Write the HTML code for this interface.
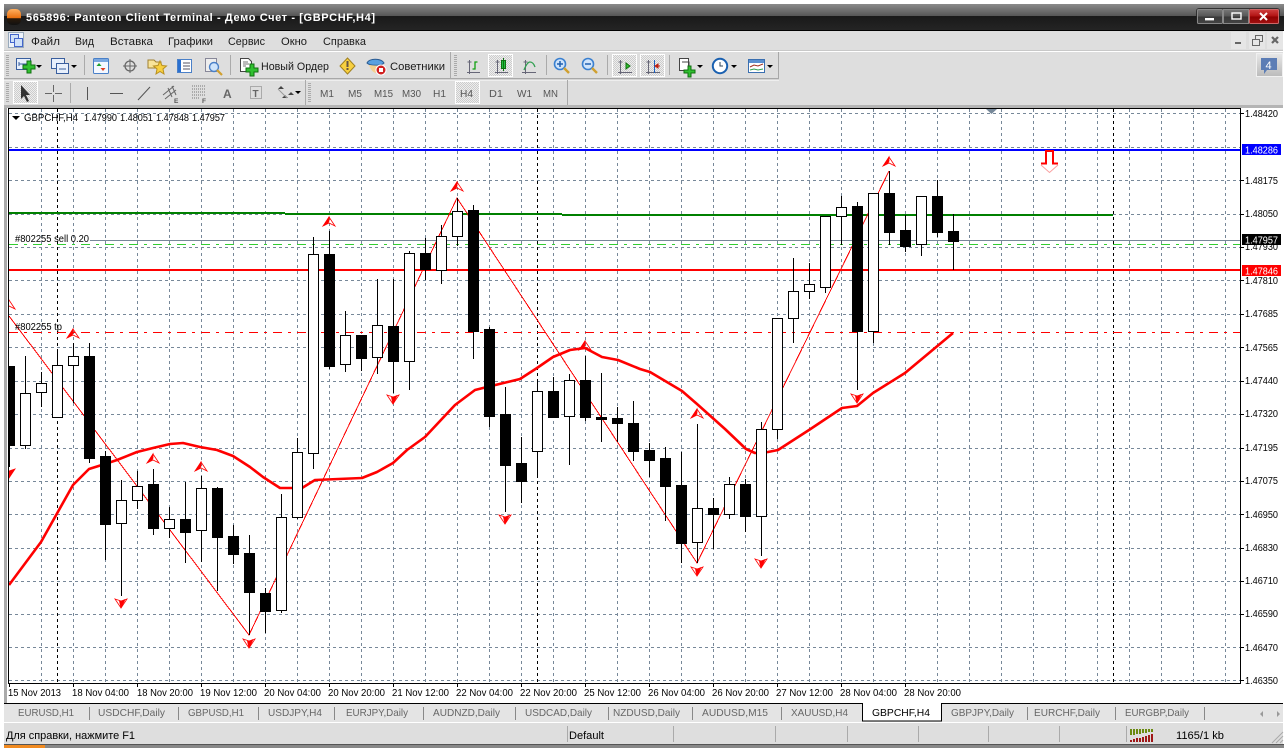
<!DOCTYPE html>
<html><head><meta charset="utf-8"><title>Panteon Client Terminal</title>
<style>
html,body{margin:0;padding:0;background:#fff;width:1288px;height:748px;overflow:hidden}
svg{display:block}
text{font-family:"Liberation Sans","Noto Sans CJK JP",sans-serif;font-size:10px;fill:#000}
.m{font-size:11px;fill:#1a1a1a}
.tf{fill:#555}
.tab{fill:#666;font-size:10.5px}
</style></head><body>
<svg width="1288" height="748" viewBox="0 0 1288 748" xmlns="http://www.w3.org/2000/svg">
<defs>
<linearGradient id="t1" x1="0" y1="0" x2="0" y2="1"><stop offset="0" stop-color="#8a8a8a"/><stop offset="1" stop-color="#565656"/></linearGradient>
<linearGradient id="t2" x1="0" y1="0" x2="0" y2="1"><stop offset="0" stop-color="#191919"/><stop offset="1" stop-color="#242424"/></linearGradient>
<linearGradient id="orb" x1="0" y1="0" x2="0" y2="1"><stop offset="0" stop-color="#ffb060"/><stop offset=".55" stop-color="#e87010"/><stop offset=".6" stop-color="#2a1a0a"/><stop offset="1" stop-color="#111"/></linearGradient>
<linearGradient id="bg" x1="0" y1="0" x2="0" y2="1"><stop offset="0" stop-color="#777"/><stop offset=".5" stop-color="#555"/><stop offset=".5" stop-color="#383838"/><stop offset="1" stop-color="#444"/></linearGradient>
<linearGradient id="br" x1="0" y1="0" x2="0" y2="1"><stop offset="0" stop-color="#d04040"/><stop offset=".5" stop-color="#b01010"/><stop offset=".5" stop-color="#900000"/><stop offset="1" stop-color="#a01010"/></linearGradient>
<linearGradient id="bub" x1="0" y1="0" x2="0" y2="1"><stop offset="0" stop-color="#e8e8e8"/><stop offset="1" stop-color="#bbb"/></linearGradient>
<pattern id="dith" width="2" height="2" patternUnits="userSpaceOnUse"><rect width="2" height="2" fill="#eee"/><rect width="1" height="1" fill="#ccc"/><rect x="1" y="1" width="1" height="1" fill="#ccc"/></pattern>
<clipPath id="cc"><rect x="9" y="109" width="1231" height="574"/></clipPath>
</defs>

<!-- window chrome -->
<rect x="4" y="4" width="1280" height="12" fill="url(#t1)"/>
<rect x="4" y="16" width="1280" height="14" fill="url(#t2)"/>
<rect x="4" y="30" width="1280" height="1" fill="#000"/>
<rect x="7" y="9" width="14" height="16" rx="5" fill="url(#orb)"/>
<text x="26" y="21" textLength="349" lengthAdjust="spacing" style="font-size:11px;font-weight:bold;fill:#fff">565896: Panteon Client Terminal - Демо Счет - [GBPCHF,H4]</text>
<rect x="1196" y="8" width="84" height="17" rx="3" fill="#222" opacity=".8"/>
<rect x="1197.5" y="9.5" width="25" height="14" rx="1" fill="url(#bg)" stroke="#888"/>
<rect x="1223.5" y="9.5" width="25" height="14" fill="url(#bg)" stroke="#888"/>
<rect x="1249.5" y="9.5" width="29" height="14" rx="1" fill="url(#br)" stroke="#c66"/>
<rect x="1205" y="18" width="9" height="2.4" fill="#fff"/>
<rect x="1232" y="13" width="9" height="6" fill="none" stroke="#fff" stroke-width="1.4"/>
<path d="M1260 13l7 7M1267 13l-7 7" stroke="#fff" stroke-width="2"/>

<rect x="4" y="31" width="1279" height="75" fill="#dedede"/>
<rect x="4" y="51" width="1279" height="1" fill="#fff"/>
<rect x="4" y="50" width="1279" height="1" fill="#c8c8c8"/>
<rect x="4" y="105" width="1279" height="3" fill="#b4b4b4"/>
<rect x="4" y="78" width="775" height="1.5" fill="#a8a8a8"/>
<rect x="4" y="79.5" width="775" height="1" fill="#fff"/>
<rect x="778" y="52" width="1" height="27" fill="#a8a8a8"/>
<rect x="567" y="80" width="1" height="25" fill="#a8a8a8"/>
<rect x="450" y="52" width="1" height="26" fill="#aaa"/>
<rect x="305" y="80" width="1" height="25" fill="#aaa"/>

<!-- menu -->
<g fill="none">
<rect x="8.5" y="32.5" width="15" height="15" fill="#eef3fb" stroke="#9ab"/>
<rect x="10.5" y="34.5" width="8" height="8" fill="#cfe0f8" stroke="#46c"/>
<rect x="14.5" y="38.5" width="8" height="8" fill="#cfe0f8" stroke="#46c"/>
</g>
<text class="m" x="31" y="45" textLength="29" lengthAdjust="spacingAndGlyphs">Файл</text>
<text class="m" x="75" y="45" textLength="19" lengthAdjust="spacingAndGlyphs">Вид</text>
<text class="m" x="110" y="45" textLength="43" lengthAdjust="spacingAndGlyphs">Вставка</text>
<text class="m" x="168" y="45" textLength="45" lengthAdjust="spacingAndGlyphs">Графики</text>
<text class="m" x="228" y="45" textLength="37" lengthAdjust="spacingAndGlyphs">Сервис</text>
<text class="m" x="281" y="45" textLength="26" lengthAdjust="spacingAndGlyphs">Окно</text>
<text class="m" x="323" y="45" textLength="43" lengthAdjust="spacingAndGlyphs">Справка</text>
<rect x="1231" y="32" width="15" height="17" fill="#e6e6e6"/><rect x="1249" y="32" width="16" height="17" fill="#e6e6e6"/><rect x="1267" y="32" width="16" height="17" fill="#e6e6e6"/>
<rect x="1235" y="42" width="6" height="2" fill="#666"/>
<path d="M1252.5 39.5h7v6h-7zM1255.5 39v-3.500h7v6h-3" fill="none" stroke="#666"/>
<path d="M1272 37l6 6M1278 37l-6 6" stroke="#666" stroke-width="2.200"/>

<!-- toolbar 1 -->
<path d="M7.500 55v21" stroke="#aaa" stroke-width="3" stroke-dasharray="1 1"/>
<rect x="84" y="55" width="1" height="20" fill="#aaa"/><rect x="230" y="55" width="1" height="20" fill="#aaa"/>
<rect x="546" y="55" width="1" height="20" fill="#aaa"/><rect x="607" y="55" width="1" height="20" fill="#aaa"/><rect x="669" y="55" width="1" height="20" fill="#aaa"/>
<path d="M455.500 55v21" stroke="#aaa" stroke-width="3" stroke-dasharray="1 1"/>
<!-- new chart -->
<rect x="16.500" y="58.500" width="14" height="11" fill="#e8f0fc" stroke="#3a5f9e"/><path d="M19 64h8M19 62v4M27 62v4" stroke="#3a5f9e" fill="none"/>
<path d="M27 61h4v4h4v4h-4v4h-4v-4h-4v-4h4z" fill="#30c030" stroke="#107010"/>
<path d="M36 65h6l-3 3z" fill="#000"/>
<!-- profiles -->
<rect x="51.500" y="58.500" width="13" height="10" fill="#e8f0fc" stroke="#3a5f9e"/><rect x="56.500" y="63.500" width="12" height="10" fill="#e8f0fc" stroke="#3a5f9e"/><path d="M59 69h7" stroke="#3a5f9e"/>
<path d="M71 65h6l-3 3z" fill="#000"/>
<!-- market watch -->
<rect x="93.500" y="58.500" width="15" height="15" rx="1" fill="#f4f8ff" stroke="#4a80c8"/><rect x="94" y="59" width="14" height="3" fill="#7aa8e0"/><path d="M99 63l2.500 3h-5z" fill="#20a030"/><path d="M103 71l2.500-3h-5z" fill="#e04020"/>
<!-- crosshair -->
<circle cx="130" cy="66" r="5" fill="none" stroke="#666" stroke-width="1.300"/><path d="M130 59v14M123 66h14" stroke="#666"/>
<!-- favorites -->
<path d="M148 60h6l2 2h5v6h-13z" fill="#f8e49a" stroke="#a08030"/><path d="M160 61l2 4.500 4.500.5-3.500 3 1 5-4-2.500-4 2.500 1-5-3.500-3 4.500-.5z" fill="#f8d040" stroke="#b89020"/>
<!-- terminal -->
<rect x="177.500" y="59.500" width="14" height="13" fill="#fff" stroke="#4a80c8"/><rect x="178" y="60" width="3" height="12" fill="#2a70d0"/><path d="M183 63h7M183 66h7M183 69h7" stroke="#556"/>
<!-- tester -->
<rect x="205.500" y="58.500" width="11" height="13" fill="#eee" stroke="#889"/><circle cx="214" cy="67" r="4.500" fill="#cfe4fb" stroke="#4a80c8" stroke-width="1.400"/><path d="M217 70l5 5" stroke="#d0a030" stroke-width="2.200"/>
<!-- new order -->
<path d="M240.500 58.500h8l3 3v10h-11z" fill="#fff" stroke="#444"/><path d="M243 62h5M243 64h6M243 66h3" stroke="#777"/>
<path d="M250 64h4v4h4v4h-4v4h-4v-4h-4v-4h4z" fill="#30c030" stroke="#107010"/>
<text class="m" x="261" y="70" textLength="68" lengthAdjust="spacingAndGlyphs">Новый Ордер</text>
<!-- alert -->
<path d="M347.500 58l7.500 8-7.500 8-7.500-8z" fill="#f8d040" stroke="#a08020"/><rect x="346.500" y="61" width="2" height="6" fill="#654"/><rect x="346.500" y="68" width="2" height="2" fill="#654"/>
<!-- experts -->
<path d="M367 63c2-5 14-5 17 0-3 3-14 3-17 0z" fill="#5aa0e0" stroke="#2a5a90"/><path d="M369 65c2 6 5 8 8 8s4-1 5-3l-2-4z" fill="#f4d090"/><circle cx="381" cy="70" r="5" fill="#d02020" stroke="#fff"/><rect x="379" y="68" width="4" height="4" fill="#fff"/>
<text class="m" x="390" y="70" textLength="55" lengthAdjust="spacingAndGlyphs">Советники</text>
<!-- chart type buttons -->
<rect x="488.500" y="54.500" width="24" height="22" fill="url(#dith)" stroke="#fff"/>
<rect x="612.500" y="54.500" width="24" height="22" fill="url(#dith)" stroke="#fff"/>
<rect x="640.500" y="54.500" width="24" height="22" fill="url(#dith)" stroke="#fff"/>
<g fill="none" stroke="#667" stroke-width="1">
<path d="M469.500 60v14M467 72.500h13M467.500 62h4"/>
<path d="M497.500 60v14M495 72.500h13M495.500 62h4"/>
<path d="M525.500 60v14M522 72.500h14M523.500 62h4"/>
<path d="M620.500 60v14M618 72.500h14M618.500 62h4"/>
<path d="M648.500 60v14M646 72.500h14M646.500 62h4"/>
</g>
<path d="M472.500 69h2.500v-7h2.500" fill="none" stroke="#10a010" stroke-width="1.300"/>
<rect x="501.500" y="60.500" width="4" height="8" fill="#20c040" stroke="#107010"/><path d="M503.500 58v13" stroke="#107010"/>
<path d="M524 70c2-5 4-8 6-8s4 2 5 5" fill="none" stroke="#30a050" stroke-width="1.300"/>
<path d="M626 63l4 3-4 3z" fill="#30c030" stroke="#107010"/>
<path d="M654.500 60v13" stroke="#1a60c0"/><path d="M660 66h-3m1-2-3 2 3 2z" stroke="#c02010" fill="#c02010"/>
<!-- zoom -->
<circle cx="560" cy="64" r="5.500" fill="#cfe4fb" stroke="#3a80d0" stroke-width="1.600"/><path d="M557 64h6M560 61v6" stroke="#2060b0" stroke-width="1.500"/><path d="M564 68l5 5" stroke="#d0a030" stroke-width="2.400"/>
<circle cx="588" cy="64" r="5.500" fill="#cfe4fb" stroke="#3a80d0" stroke-width="1.600"/><path d="M585 64h6" stroke="#2060b0" stroke-width="1.500"/><path d="M592 68l5 5" stroke="#d0a030" stroke-width="2.400"/>
<!-- indicators -->
<rect x="679.500" y="58.500" width="9" height="12" fill="#fff" stroke="#444"/><path d="M682 62h7v10" fill="none" stroke="#444"/>
<path d="M688 66h3v4h4v3h-4v4h-3v-4h-4v-3h4z" fill="#30c030" stroke="#107010"/>
<path d="M697 65h6l-3 3z" fill="#000"/>
<circle cx="720" cy="66" r="7.200" fill="#fff" stroke="#1a60b0" stroke-width="2"/><path d="M720 62v4h3" fill="none" stroke="#345"/>
<path d="M731 65h6l-3 3z" fill="#000"/>
<rect x="748.500" y="59.500" width="16" height="13" fill="#fff" stroke="#3a6fb0"/><rect x="749" y="60" width="15" height="3" fill="#5a8fd0"/><path d="M750 67l4-2 4 1 5-2" stroke="#a03020" fill="none"/><path d="M750 70l4-1 4 1 5-1" stroke="#30a050" fill="none"/>
<path d="M767 65h6l-3 3z" fill="#000"/>
<!-- message -->
<rect x="1256.500" y="53.500" width="26" height="23" fill="url(#bub)" stroke="#f0f0f0"/>
<path d="M1261 58h16v12h-10l-3 4v-4h-3z" fill="#5c7db5"/>
<text x="1265.500" y="69" style="font-size:11px;fill:#fff">4</text>

<!-- toolbar 2 -->
<path d="M7.500 83v20" stroke="#aaa" stroke-width="3" stroke-dasharray="1 1"/>
<rect x="13.500" y="81.500" width="24" height="22" fill="url(#dith)" stroke="#fff"/>
<path d="M21 85v14l3-3 3 6 2-1-3-6h4z" fill="#333"/>
<path d="M53.500 85v18M45 93.500h17" stroke="#666" stroke-dasharray="7 3"/>
<rect x="70" y="83" width="1" height="20" fill="#aaa"/>
<path d="M87.500 87v13" stroke="#555"/><path d="M110 93.500h13" stroke="#555"/><path d="M138 100l12-13" stroke="#555"/>
<path d="M163 95l11-9M165 99l11-9M168 88l4 9M172 86l4 9" stroke="#666" fill="none"/><text x="174" y="103" style="font-size:6.500px;fill:#555;font-weight:bold">E</text>
<path d="M192 86h14M192 89h14M192 92h14M192 95h14M192 98h8" stroke="#777" stroke-dasharray="1 1"/><text x="202" y="103" style="font-size:6.500px;fill:#555;font-weight:bold">F</text>
<text x="223" y="98" style="font-size:12px;font-weight:bold;fill:#666">A</text>
<rect x="250.500" y="86.500" width="11" height="12" fill="none" stroke="#777" stroke-dasharray="1 1"/><text x="252.500" y="97" style="font-size:10px;font-weight:bold;fill:#666">T</text>
<path d="M281 86l3 3h-6zM291 92l3 3h-6zM285 95l3 3h-6z" fill="#444"/><path d="M278 89l9 9" stroke="#999"/>
<path d="M295 91h6l-3 3z" fill="#000"/>
<path d="M309.500 83v20" stroke="#aaa" stroke-width="3" stroke-dasharray="1 1"/>
<rect x="455.500" y="81.500" width="24" height="22" fill="url(#dith)" stroke="#fff"/>
<text class="tf" x="320" y="97" textLength="14" lengthAdjust="spacingAndGlyphs">M1</text>
<text class="tf" x="348" y="97" textLength="14" lengthAdjust="spacingAndGlyphs">M5</text>
<text class="tf" x="374" y="97" textLength="19" lengthAdjust="spacingAndGlyphs">M15</text>
<text class="tf" x="402" y="97" textLength="19" lengthAdjust="spacingAndGlyphs">M30</text>
<text class="tf" x="433" y="97" textLength="13" lengthAdjust="spacingAndGlyphs">H1</text>
<text class="tf" x="460" y="97" textLength="13" lengthAdjust="spacingAndGlyphs">H4</text>
<text class="tf" x="489" y="97" textLength="14" lengthAdjust="spacingAndGlyphs">D1</text>
<text class="tf" x="517" y="97" textLength="15" lengthAdjust="spacingAndGlyphs">W1</text>
<text class="tf" x="543" y="97" textLength="15" lengthAdjust="spacingAndGlyphs">MN</text>

<!-- side borders -->
<rect x="4" y="108" width="3" height="616" fill="#aaa"/>
<!-- chart -->
<rect x="8" y="108" width="1232" height="1" fill="#000"/>
<rect x="8" y="108" width="1" height="576" fill="#000"/>
<rect x="1240" y="108" width="1" height="576" fill="#000"/>
<rect x="8" y="683" width="1232" height="1" fill="#000"/>

<g clip-path="url(#cc)" shape-rendering="crispEdges">
<!-- grid -->
<path fill="none" stroke="#778899" stroke-dasharray="3 3" d="M9 113.500H1240M9 147.500H1240M9 180.500H1240M9 214.500H1240M9 247.500H1240M9 280.500H1240M9 314.500H1240M9 347.500H1240M9 381.500H1240M9 414.500H1240M9 448.500H1240M9 481.500H1240M9 514.500H1240M9 548.500H1240M9 581.500H1240M9 614.500H1240M9 647.500H1240M9 680.500H1240
M41.500 109V683M73.500 109V683M105.500 109V683M137.500 109V683M169.500 109V683M201.500 109V683M233.500 109V683M265.500 109V683M297.500 109V683M329.500 109V683M361.500 109V683M393.500 109V683M425.500 109V683M457.500 109V683M489.500 109V683M521.500 109V683M553.500 109V683M585.500 109V683M617.500 109V683M649.500 109V683M681.500 109V683M713.500 109V683M745.500 109V683M777.500 109V683M809.500 109V683M841.500 109V683M873.500 109V683M905.500 109V683M937.500 109V683M969.500 109V683M1001.500 109V683M1033.500 109V683M1065.500 109V683M1097.500 109V683M1129.500 109V683M1161.500 109V683M1193.500 109V683M1225.500 109V683"/>
<path fill="none" stroke="#000" stroke-dasharray="3 3" d="M57.500 109V683M537.500 109V683M1113.500 109V683"/>
<!-- horizontal objects -->
<rect x="9" y="149" width="1231" height="2" fill="#0000ff"/>
<rect x="9" y="212" width="276" height="2" fill="#008000"/>
<rect x="285" y="213" width="277" height="2" fill="#008000"/>
<rect x="562" y="214" width="551" height="2" fill="#008000"/>
<rect x="90" y="240" width="1150" height="1" fill="#778899"/>
<path d="M9 244.500H1240" stroke="#32cd32" stroke-dasharray="9 6 3 6" fill="none"/>
<rect x="9" y="269" width="1231" height="2" fill="#ff0000"/>
<path d="M9 332.500H1240" stroke="#ff0000" stroke-dasharray="9 6 3 6" fill="none"/>
</g>
<g clip-path="url(#cc)">
<!-- zigzag -->
<path fill="none" stroke="#f00" stroke-width="1" shape-rendering="crispEdges" d="M9 316L249 635L457 198L697 563L889 171"/>
<!-- MA -->
<path fill="none" stroke="#f00" stroke-width="2.600" stroke-linejoin="round" d="M9 585L41 542L73 485L89 469L105 464L117 460L137 452L153 448L170 444L183 443L200 447L217 450L233 456L250 467L263 477L280 488L302 488L315 480L362 478L377 472L393 463L407 450L425 437L455 405L475 390L483 388L520 379L537 368L553 357L570 350L585 348L602 357L618 360L640 369L650 372L682 391L697 404L725 429L746 449L755 453L768 452L778 450L809 430L842 408L857 406L873 393L905 373L953 333"/>
<!-- arrows up -->
<g id="arrows" fill="none" stroke="#f00" stroke-width=".8">
<g transform="translate(73 334)"><path d="M0-5L6 4 0 1-6 4Z"/><path d="M0-5L-5 3.500-1 1 0-1Z" fill="#f00"/></g>
<g transform="translate(153 459)"><path d="M0-5L6 4 0 1-6 4Z"/><path d="M0-5L-5 3.500-1 1 0-1Z" fill="#f00"/></g>
<g transform="translate(201 467)"><path d="M0-5L6 4 0 1-6 4Z"/><path d="M0-5L-5 3.500-1 1 0-1Z" fill="#f00"/></g>
<g transform="translate(329 222)"><path d="M0-5L6 4 0 1-6 4Z"/><path d="M0-5L-5 3.500-1 1 0-1Z" fill="#f00"/></g>
<g transform="translate(457 187)"><path d="M0-5L6 4 0 1-6 4Z"/><path d="M0-5L-5 3.500-1 1 0-1Z" fill="#f00"/></g>
<g transform="translate(585 346)"><path d="M0-5L6 4 0 1-6 4Z"/><path d="M0-5L-5 3.500-1 1 0-1Z" fill="#f00"/></g>
<g transform="translate(697 414)"><path d="M0-5L6 4 0 1-6 4Z"/><path d="M0-5L-5 3.500-1 1 0-1Z" fill="#f00"/></g>
<g transform="translate(889 162)"><path d="M0-5L6 4 0 1-6 4Z"/><path d="M0-5L-5 3.500-1 1 0-1Z" fill="#f00"/></g>
<g transform="translate(9 305)"><path d="M0-5L6 4 0 1-6 4Z"/></g>
<!-- arrows down -->
<g transform="translate(121 603)"><path d="M0 5L6-4 0-2-6-4Z"/><path d="M0 5L2 -2 4-3.500Z" fill="#f00"/><path d="M0 5L-1.500-2 1.500-2Z" fill="#f00"/></g>
<g transform="translate(249 643)"><path d="M0 5L6-4 0-2-6-4Z"/><path d="M0 5L2 -2 4-3.500Z" fill="#f00"/><path d="M0 5L-1.500-2 1.500-2Z" fill="#f00"/></g>
<g transform="translate(393 399)"><path d="M0 5L6-4 0-2-6-4Z"/><path d="M0 5L2 -2 4-3.500Z" fill="#f00"/><path d="M0 5L-1.500-2 1.500-2Z" fill="#f00"/></g>
<g transform="translate(505 519)"><path d="M0 5L6-4 0-2-6-4Z"/><path d="M0 5L2 -2 4-3.500Z" fill="#f00"/><path d="M0 5L-1.500-2 1.500-2Z" fill="#f00"/></g>
<g transform="translate(697 571)"><path d="M0 5L6-4 0-2-6-4Z"/><path d="M0 5L2 -2 4-3.500Z" fill="#f00"/><path d="M0 5L-1.500-2 1.500-2Z" fill="#f00"/></g>
<g transform="translate(761 563)"><path d="M0 5L6-4 0-2-6-4Z"/><path d="M0 5L2 -2 4-3.500Z" fill="#f00"/><path d="M0 5L-1.500-2 1.500-2Z" fill="#f00"/></g>
<g transform="translate(857 398)"><path d="M0 5L6-4 0-2-6-4Z"/><path d="M0 5L2 -2 4-3.500Z" fill="#f00"/><path d="M0 5L-1.500-2 1.500-2Z" fill="#f00"/></g>
<g transform="translate(9 473)"><path d="M0 5L6-4 0-2-6-4Z" fill="#f00"/></g>
</g>
</g>
<g clip-path="url(#cc)" shape-rendering="crispEdges">
<!-- wicks -->
<path fill="none" stroke="#000" d="M9.500 366V467M25.500 356V449M41.500 372V407M57.500 349V417M73.500 343V403M89.500 343V463M105.500 451V560M121.500 480V596M137.500 471V509M153.500 469V535M169.500 507V538M185.500 482V563M201.500 476V562M217.500 487V591M233.500 525V564M249.500 535V635M265.500 588V633M281.500 494V613M297.500 438V519M313.500 237V469M329.500 231V369M345.500 311V372M361.500 335V371M377.500 279V374M393.500 279V393M409.500 251V390M425.500 238V280M441.500 225V284M457.500 198V246M473.500 205V359M489.500 327V427M505.500 387V512M521.500 437V503M537.500 379V478M553.500 377V417M569.500 374V465M585.500 356V421M601.500 373V442M617.500 407V442M633.500 401V461M649.500 443V477M665.500 447V521M681.500 452V563M697.500 424V563M713.500 498V549M729.500 477V519M745.500 479V532M761.500 422V556M777.500 318V439M793.500 258V343M809.500 263V299M825.500 216V293M841.500 196V245M857.500 202V390M873.500 193V343M889.500 171V245M905.500 215V252M921.500 196V256M937.500 180V237M953.500 214V270"/>
<!-- black bodies -->
<path fill="#000" d="M4 366h11v80h-11zM84 356h11v103h-11zM100 456h11v69h-11zM148 484h11v45h-11zM180 519h11v14h-11zM212 488h11v50h-11zM228 536h11v19h-11zM244 553h11v40h-11zM260 593h11v19h-11zM324 254h11v113h-11zM356 335h11v24h-11zM388 326h11v36h-11zM420 253h11v17h-11zM468 210h11v122h-11zM484 329h11v88h-11zM500 414h11v52h-11zM516 463h11v19h-11zM548 391h11v27h-11zM580 380h11v38h-11zM596 417h11v3h-11zM612 418h11v6h-11zM628 423h11v29h-11zM644 450h11v11h-11zM660 458h11v29h-11zM676 485h11v59h-11zM708 508h11v7h-11zM740 484h11v33h-11zM852 206h11v126h-11zM884 193h11v40h-11zM900 230h11v17h-11zM932 196h11v37h-11zM948 231h11v11h-11z"/>
<!-- white bodies -->
<path fill="#fff" stroke="#000" d="M20.500 393.500h10v52h-10zM36.500 383.500h10v9h-10zM52.500 365.500h10v52h-10zM68.500 356.500h10v9h-10zM116.500 500.500h10v23h-10zM132.500 486.500h10v14h-10zM164.500 519.500h10v9h-10zM196.500 488.500h10v42h-10zM276.500 517.500h10v93h-10zM292.500 452.500h10v65h-10zM308.500 254.500h10v199h-10zM340.500 335.500h10v29h-10zM372.500 325.500h10v32h-10zM404.500 253.500h10v108h-10zM436.500 236.500h10v34h-10zM452.500 211.500h10v25h-10zM532.500 391.500h10v60h-10zM564.500 380.500h10v36h-10zM692.500 508.500h10v34h-10zM724.500 484.500h10v30h-10zM756.500 429.500h10v87h-10zM772.500 318.500h10v111h-10zM788.500 291.500h10v27h-10zM804.500 284.500h10v7h-10zM820.500 216.500h10v71h-10zM836.500 207.500h10v9h-10zM868.500 193.500h10v138h-10zM916.500 196.500h10v48h-10z"/>
</g>
<!-- top marker -->
<path d="M986 109h11l-5.500 5z" fill="#778899"/>
<!-- red sell marker -->
<path d="M1041 163.500h5v-12.500h7v12.500h5" fill="none" stroke="#f00" stroke-width="2"/>
<path d="M1041 165l8.500 7.500 8.500-7.500" fill="none" stroke="#f9a0a0" stroke-width="1"/>

<!-- chart labels -->
<path d="M12 116h8l-4 4z" fill="#000"/>
<text x="24" y="121" textLength="54" lengthAdjust="spacingAndGlyphs">GBPCHF,H4</text>
<text x="84" y="121" textLength="33" lengthAdjust="spacingAndGlyphs">1.47990</text>
<text x="120" y="121" textLength="33" lengthAdjust="spacingAndGlyphs">1.48051</text>
<text x="156" y="121" textLength="33" lengthAdjust="spacingAndGlyphs">1.47848</text>
<text x="192" y="121" textLength="33" lengthAdjust="spacingAndGlyphs">1.47957</text>
<text x="15" y="242" textLength="74" lengthAdjust="spacingAndGlyphs">#802255 sell 0.20</text>
<text x="15" y="330" textLength="47" lengthAdjust="spacingAndGlyphs">#802255 tp</text>

<!-- right axis -->
<path stroke="#000" d="M1241 113.500h3M1241 180.500h3M1241 214.500h3M1241 247.500h3M1241 280.500h3M1241 314.500h3M1241 347.500h3M1241 381.500h3M1241 414.500h3M1241 448.500h3M1241 481.500h3M1241 514.500h3M1241 548.500h3M1241 581.500h3M1241 614.500h3M1241 647.500h3M1241 680.500h3"/>
<text x="1245" y="117" textLength="33" lengthAdjust="spacingAndGlyphs">1.48420</text>
<text x="1245" y="184" textLength="33" lengthAdjust="spacingAndGlyphs">1.48175</text>
<text x="1245" y="217" textLength="33" lengthAdjust="spacingAndGlyphs">1.48050</text>
<text x="1245" y="250" textLength="33" lengthAdjust="spacingAndGlyphs">1.47930</text>
<text x="1245" y="284" textLength="33" lengthAdjust="spacingAndGlyphs">1.47810</text>
<text x="1245" y="317" textLength="33" lengthAdjust="spacingAndGlyphs">1.47685</text>
<text x="1245" y="351" textLength="33" lengthAdjust="spacingAndGlyphs">1.47565</text>
<text x="1245" y="384" textLength="33" lengthAdjust="spacingAndGlyphs">1.47440</text>
<text x="1245" y="417" textLength="33" lengthAdjust="spacingAndGlyphs">1.47320</text>
<text x="1245" y="451" textLength="33" lengthAdjust="spacingAndGlyphs">1.47195</text>
<text x="1245" y="484" textLength="33" lengthAdjust="spacingAndGlyphs">1.47075</text>
<text x="1245" y="518" textLength="33" lengthAdjust="spacingAndGlyphs">1.46950</text>
<text x="1245" y="551" textLength="33" lengthAdjust="spacingAndGlyphs">1.46830</text>
<text x="1245" y="584" textLength="33" lengthAdjust="spacingAndGlyphs">1.46710</text>
<text x="1245" y="617" textLength="33" lengthAdjust="spacingAndGlyphs">1.46590</text>
<text x="1245" y="651" textLength="33" lengthAdjust="spacingAndGlyphs">1.46470</text>
<text x="1245" y="684" textLength="33" lengthAdjust="spacingAndGlyphs">1.46350</text>
<rect x="1242" y="144" width="39" height="11" fill="#0000ff"/><text x="1245" y="153.500" textLength="33" lengthAdjust="spacingAndGlyphs" style="fill:#fff">1.48286</text>
<rect x="1242" y="234" width="39" height="11" fill="#000"/><text x="1245" y="243.500" textLength="33" lengthAdjust="spacingAndGlyphs" style="fill:#fff">1.47957</text>
<rect x="1242" y="265" width="39" height="11" fill="#f00"/><text x="1245" y="274.500" textLength="33" lengthAdjust="spacingAndGlyphs" style="fill:#fff">1.47846</text>

<!-- time axis -->
<path stroke="#000" d="M9.500 684v3M73.500 684v3M137.500 684v3M201.500 684v3M265.500 684v3M329.500 684v3M393.500 684v3M457.500 684v3M521.500 684v3M585.500 684v3M649.500 684v3M713.500 684v3M777.500 684v3M841.500 684v3M905.500 684v3"/>
<text x="8" y="696" textLength="53" lengthAdjust="spacingAndGlyphs">15 Nov 2013</text>
<text x="72" y="696" textLength="57" lengthAdjust="spacingAndGlyphs">18 Nov 04:00</text>
<text x="137" y="696" textLength="56" lengthAdjust="spacingAndGlyphs">18 Nov 20:00</text>
<text x="200" y="696" textLength="57" lengthAdjust="spacingAndGlyphs">19 Nov 12:00</text>
<text x="264" y="696" textLength="57" lengthAdjust="spacingAndGlyphs">20 Nov 04:00</text>
<text x="328" y="696" textLength="57" lengthAdjust="spacingAndGlyphs">20 Nov 20:00</text>
<text x="392" y="696" textLength="57" lengthAdjust="spacingAndGlyphs">21 Nov 12:00</text>
<text x="456" y="696" textLength="57" lengthAdjust="spacingAndGlyphs">22 Nov 04:00</text>
<text x="520" y="696" textLength="57" lengthAdjust="spacingAndGlyphs">22 Nov 20:00</text>
<text x="584" y="696" textLength="57" lengthAdjust="spacingAndGlyphs">25 Nov 12:00</text>
<text x="648" y="696" textLength="57" lengthAdjust="spacingAndGlyphs">26 Nov 04:00</text>
<text x="712" y="696" textLength="57" lengthAdjust="spacingAndGlyphs">26 Nov 20:00</text>
<text x="776" y="696" textLength="57" lengthAdjust="spacingAndGlyphs">27 Nov 12:00</text>
<text x="840" y="696" textLength="57" lengthAdjust="spacingAndGlyphs">28 Nov 04:00</text>
<text x="904" y="696" textLength="57" lengthAdjust="spacingAndGlyphs">28 Nov 20:00</text>

<!-- tabs -->
<rect x="4" y="703" width="1279" height="20" fill="#e4e4e4"/>
<rect x="4" y="703" width="1279" height="1" fill="#000"/>
<rect x="4" y="722" width="1279" height="1" fill="#fff"/>
<path stroke="#888" d="M89.500 707v13M178.500 707v13M258.500 707v13M334.500 707v13M423.500 707v13M515.500 707v13M608.500 707v13M692.500 707v13M781.500 707v13M1027.500 707v13M1115.500 707v13M1204.500 707v13"/>
<path d="M862.500 703.500v17.500h79v-17.500" fill="#fff" stroke="#000"/><rect x="863" y="703" width="78" height="2" fill="#fff"/>
<text class="tab" x="18" y="716" textLength="56" lengthAdjust="spacingAndGlyphs">EURUSD,H1</text>
<text class="tab" x="98" y="716" textLength="67" lengthAdjust="spacingAndGlyphs">USDCHF,Daily</text>
<text class="tab" x="188" y="716" textLength="56" lengthAdjust="spacingAndGlyphs">GBPUSD,H1</text>
<text class="tab" x="268" y="716" textLength="54" lengthAdjust="spacingAndGlyphs">USDJPY,H4</text>
<text class="tab" x="346" y="716" textLength="62" lengthAdjust="spacingAndGlyphs">EURJPY,Daily</text>
<text class="tab" x="433" y="716" textLength="67" lengthAdjust="spacingAndGlyphs">AUDNZD,Daily</text>
<text class="tab" x="525" y="716" textLength="67" lengthAdjust="spacingAndGlyphs">USDCAD,Daily</text>
<text class="tab" x="613" y="716" textLength="67" lengthAdjust="spacingAndGlyphs">NZDUSD,Daily</text>
<text class="tab" x="702" y="716" textLength="66" lengthAdjust="spacingAndGlyphs">AUDUSD,M15</text>
<text class="tab" x="791" y="716" textLength="57" lengthAdjust="spacingAndGlyphs">XAUUSD,H4</text>
<text class="tab" x="872" y="716" textLength="58" lengthAdjust="spacingAndGlyphs" style="fill:#000">GBPCHF,H4</text>
<text class="tab" x="951" y="716" textLength="63" lengthAdjust="spacingAndGlyphs">GBPJPY,Daily</text>
<text class="tab" x="1034" y="716" textLength="66" lengthAdjust="spacingAndGlyphs">EURCHF,Daily</text>
<text class="tab" x="1125" y="716" textLength="64" lengthAdjust="spacingAndGlyphs">EURGBP,Daily</text>
<path d="M1263 711l-3 3 3 3zM1277 711l3 3-3 3z" fill="#999"/>

<!-- status bar -->
<rect x="4" y="723" width="1279" height="21" fill="#dedede"/>
<rect x="4" y="744" width="1280" height="1" fill="#555"/>
<rect x="4" y="745" width="1280" height="3" fill="#888"/>
<rect x="4" y="745" width="41" height="3" fill="#f08a20"/>
<path stroke="#aaa" d="M567.500 726v16M673.500 726v16M775.500 726v16M847.500 726v16M918.500 726v16M988.500 726v16M1059.500 726v16M1126.500 726v16"/>
<text class="m" x="6" y="739" textLength="129" lengthAdjust="spacingAndGlyphs" style="fill:#000">Для справки, нажмите F1</text>
<text class="m" x="569" y="739" textLength="35" lengthAdjust="spacingAndGlyphs" style="fill:#000">Default</text>
<text class="m" x="1176" y="739" textLength="48" lengthAdjust="spacingAndGlyphs" style="fill:#000">1165/1 kb</text>
<path fill="#6a8a10" d="M1130 729h2v6h-2zM1133 729h2v6h-2zM1136 729h2v5h-2zM1139 729h2v5h-2zM1142 729h2v4h-2zM1145 729h2v4h-2zM1148 729h2v3h-2zM1151 729h2v3h-2z"/>
<path fill="#a01818" d="M1130 740h2v2h-2zM1133 739h2v3h-2zM1136 738h2v4h-2zM1139 738h2v4h-2zM1142 737h2v5h-2zM1145 736h2v6h-2zM1148 735h2v7h-2zM1151 734h2v8h-2z"/>
<path stroke="#aaa" d="M1272 743l11-11M1276 743l7-7M1280 743l3-3" fill="none"/>
</svg>
</body></html>
